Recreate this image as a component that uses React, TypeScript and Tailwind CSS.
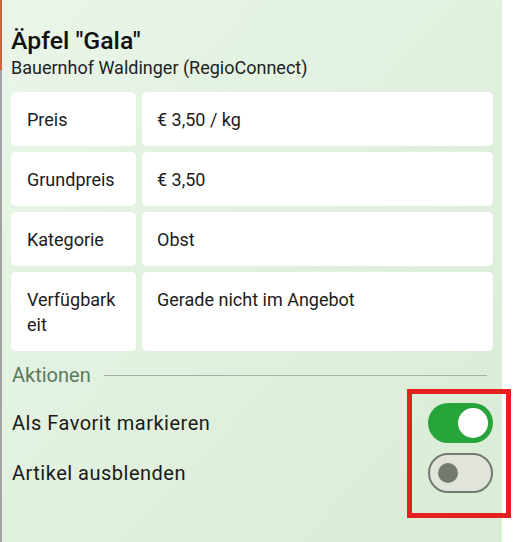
import React from "react";

const rows: { label: string; value: string }[] = [
  { label: "Preis", value: "€ 3,50 / kg" },
  { label: "Grundpreis", value: "€ 3,50" },
  { label: "Kategorie", value: "Obst" },
  { label: "Verfügbarkeit", value: "Gerade nicht im Angebot" },
];

export default function App() {
  return (
    <div
      className="relative flex h-[542px] w-[514px] overflow-hidden bg-white"
      style={{ fontFamily: "Roboto, 'Noto Sans', sans-serif" }}
    >
      <div className="flex w-[2px] flex-col">
        <div className="h-[70px] bg-[#c8643e]" />
        <div className="flex-1 bg-[#a3a3a3]" />
      </div>
      <div className="flex w-[500px] flex-col bg-gradient-to-br from-[#e9f5e9] to-[#d9ecd5] pl-[9px] pr-[9px] pt-[26px]">
        <h1 className="text-[24.8px] font-medium leading-[30px] text-[#111]">Äpfel "Gala"</h1>
        <p className="text-[18px] leading-6 text-[#222]">Bauernhof Waldinger (RegioConnect)</p>
        <div className="mt-3 grid grid-cols-[125px_1fr] gap-[6px]">
          {rows.map((r) => (
            <React.Fragment key={r.label}>
              <div className="break-all rounded-[5px] bg-white px-4 py-[14.5px] text-[18px] leading-[25px] text-[#1c1c1c]">
                {r.label}
              </div>
              <div className="rounded-[5px] bg-white px-[15px] py-[14.5px] text-[18px] leading-[25px] text-[#1c1c1c]">
                {r.value}
              </div>
            </React.Fragment>
          ))}
        </div>
        <div className="mt-[10px] flex items-center pl-px pr-[6px]">
          <span className="text-[20px] leading-7 text-[#5c7a5e]">Aktionen</span>
          <div className="ml-[13px] h-px flex-1 bg-[#a7b0a6]" />
        </div>
        <div className="mt-[14px] flex h-10 items-center justify-between pl-px">
          <span className="text-[20px] leading-7 tracking-[0.5px] text-[#1a1a1a]">Als Favorit markieren</span>
          <div className="flex h-10 w-[65px] items-center justify-end rounded-full bg-[#27a53b] pr-[5px]">
            <div className="h-[30px] w-[30px] rounded-full bg-white" />
          </div>
        </div>
        <div className="mt-[10px] flex h-10 items-center justify-between pl-px">
          <span className="text-[20px] leading-7 tracking-[0.5px] text-[#1a1a1a]">Artikel ausblenden</span>
          <div className="flex h-10 w-[65px] items-center rounded-full border-[2.5px] border-[#737a70] bg-[#e0e4da] pl-[7.5px]">
            <div className="h-5 w-5 rounded-full bg-[#727a6e]" />
          </div>
        </div>
      </div>
      <div className="absolute left-[407px] top-[389px] h-[129px] w-[104px] border-[5px] border-[#e61f1f]" />
    </div>
  );
}
